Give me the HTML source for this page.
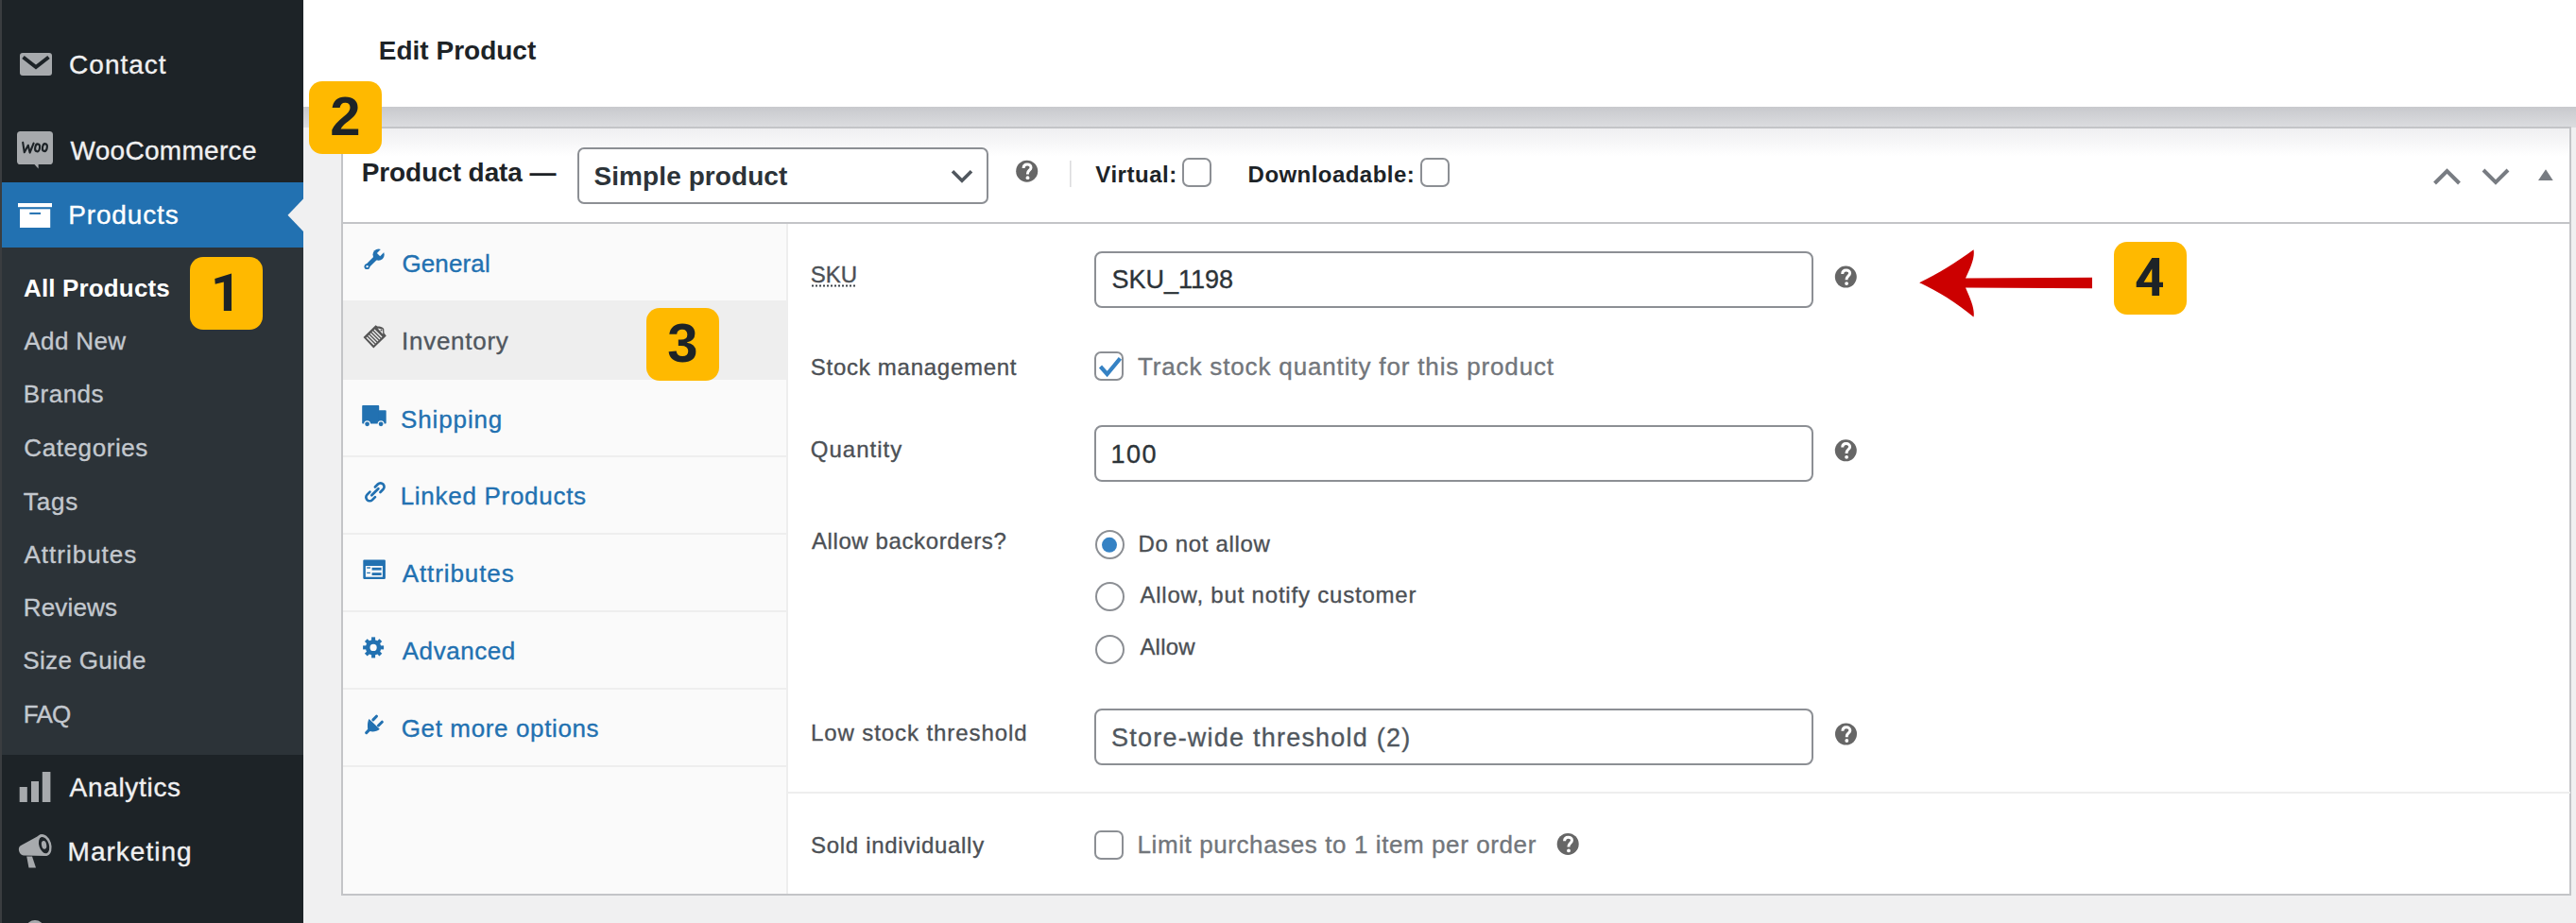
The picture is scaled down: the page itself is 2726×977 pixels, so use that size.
<!DOCTYPE html>
<html>
<head>
<meta charset="utf-8">
<style>
html,body{margin:0;padding:0}
body{width:2726px;height:977px;overflow:hidden;position:relative;background:#f0f0f1;font-family:"Liberation Sans",sans-serif}
.a{position:absolute;box-sizing:border-box}
.t{position:absolute;white-space:pre;font-family:"Liberation Sans",sans-serif}
.r{-webkit-text-stroke:0.35px currentColor}
.inp{position:absolute;box-sizing:border-box;border:2px solid #8c8f94;border-radius:8px;background:#fff}
.cb{position:absolute;box-sizing:border-box;width:31px;height:31px;border:2px solid #8c8f94;border-radius:7px;background:#fff}
.rd{position:absolute;box-sizing:border-box;width:31px;height:31px;border:2px solid #8c8f94;border-radius:50%;background:#fff}
.badge{position:absolute;width:77px;height:77px;background:#ffb900;border-radius:14px}
.sep{position:absolute;height:2px;background:#eeeeee}
svg{position:absolute;overflow:visible}
</style>
</head>
<body>
<!-- sidebar -->
<div class="a" style="left:0;top:0;width:321px;height:977px;background:#1d2327"></div>
<div class="a" style="left:0;top:262px;width:321px;height:537px;background:#2c3338"></div>
<div class="a" style="left:0;top:193px;width:321px;height:69px;background:#2271b1"></div>
<div class="a" style="left:0;top:0;width:2px;height:977px;background:#3a3d40"></div>
<svg style="left:0;top:0" width="330" height="977">
  <polygon points="304.5,227.8 321,210.6 321,245" fill="#f0f0f1"/>
  <!-- contact envelope -->
  <rect x="21" y="56" width="34" height="24" rx="3" fill="#a7aaad"/>
  <polyline points="24.5,60.5 38,71 51.5,60.5" fill="none" stroke="#1d2327" stroke-width="4" stroke-linejoin="miter"/>
  <!-- woo bubble -->
  <rect x="18" y="139" width="38" height="35" rx="3.6" fill="#a7aaad"/>
  <polygon points="35.5,173 40.6,178.5 40.6,173" fill="#a7aaad"/>
  <g transform="translate(10,130)" fill="none" stroke="#1d2327" stroke-width="2.1" stroke-linejoin="round" stroke-linecap="round">
    <polyline points="14.2,20.8 15.8,31.3 19.8,23.8 21.6,31.6 25.6,21.6"/>
    <ellipse cx="29.6" cy="26.4" rx="2.4" ry="4" transform="rotate(10 29.6 26.4)"/>
    <ellipse cx="37.4" cy="26.1" rx="2.4" ry="4" transform="rotate(10 37.4 26.1)"/>
  </g>
  <!-- products box -->
  <rect x="19" y="215" width="36" height="4.2" fill="#fff"/>
  <rect x="21" y="221.3" width="32.2" height="19.7" fill="#fff"/>
  <rect x="31.3" y="224.9" width="11.7" height="2" fill="#2271b1"/>
  <!-- analytics bars -->
  <rect x="20.7" y="833" width="8.1" height="16" fill="#a7aaad"/>
  <rect x="33" y="827" width="8" height="22" fill="#a7aaad"/>
  <rect x="44.8" y="817" width="8.6" height="32" fill="#a7aaad"/>
  <!-- megaphone -->
  <g transform="translate(10,870)">
    <path d="M12,25 L33,13.5 L38.5,36 L15,35.5 C10,35 8,27 12,25 Z" fill="#a7aaad"/>
    <path d="M18.2,36.5 L24,36.5 L28,48.5 L20.5,48.5 Z" fill="#a7aaad"/>
    <ellipse cx="36.4" cy="24.5" rx="7.8" ry="11.8" transform="rotate(-18 36.4 24.5)" fill="#a7aaad"/>
    <ellipse cx="36.6" cy="24.6" rx="5.2" ry="9" transform="rotate(-18 36.6 24.6)" fill="#1d2327"/>
    <ellipse cx="36.6" cy="24.4" rx="2.6" ry="4.4" transform="rotate(-10 36.6 24.4)" fill="#a7aaad"/>
  </g>
  <!-- bottom partial icon -->
  <ellipse cx="37" cy="982" rx="9" ry="8" fill="#a7aaad"/>
</svg>

<!-- top header -->
<div class="a" style="left:321px;top:0;width:2405px;height:113px;background:#fff"></div>
<div class="a" style="left:321px;top:113px;width:2405px;height:22px;background:linear-gradient(#c8c9cd,#dcdde0)"></div>

<!-- panel -->
<div class="a" style="left:361px;top:134px;width:2360px;height:814px;border:2px solid #c3c4c7;background:#fff"></div>
<div class="a" style="left:363px;top:136px;width:2356px;height:30px;background:linear-gradient(#efeff1,#ffffff)"></div>
<div class="a" style="left:363px;top:235px;width:2356px;height:2px;background:#c3c4c7"></div>
<!-- tabs column -->
<div class="a" style="left:363px;top:237px;width:469px;height:709px;background:#fafafa"></div>
<div class="a" style="left:832px;top:237px;width:2px;height:709px;background:#eeeeee"></div>
<div class="a" style="left:363px;top:318px;width:469px;height:84px;background:#eeeeee"></div>
<div class="sep" style="left:363px;top:482px;width:469px"></div>
<div class="sep" style="left:363px;top:564px;width:469px"></div>
<div class="sep" style="left:363px;top:646px;width:469px"></div>
<div class="sep" style="left:363px;top:728px;width:469px"></div>
<div class="sep" style="left:363px;top:810px;width:469px"></div>
<div class="sep" style="left:834px;top:838px;width:1886px"></div>

<!-- header controls -->
<div class="inp" style="left:611px;top:156px;width:435px;height:59.5px;border-radius:7px"></div>
<svg style="left:0;top:0" width="2726" height="977">
  <polyline points="1008,181.3 1018,191.3 1028,181.3" fill="none" stroke="#50575e" stroke-width="3.6"/>
  <!-- help icons -->
  <defs><g id="help"><circle cx="0" cy="0" r="11.5" fill="#666666"/>
    <path d="M-3.6,-3.2 C-3.6,-6.2 -1.8,-7.2 0.4,-7.2 C2.8,-7.2 4.3,-5.8 4.3,-3.8 C4.3,-1.2 0.8,-0.8 0.8,2.2 L0.8,3.2" fill="none" stroke="#fff" stroke-width="3"/>
    <circle cx="0.8" cy="7" r="1.9" fill="#fff"/></g></defs>
  <use href="#help" x="1086.7" y="181.2"/>
  <use href="#help" x="1953.3" y="293.1"/>
  <use href="#help" x="1953.3" y="476.8"/>
  <use href="#help" x="1953.5" y="777"/>
  <use href="#help" x="1659.2" y="893.4"/>
  <rect x="1132" y="170" width="1.6" height="28" fill="#dcdcde"/>
  <!-- right header controls -->
  <polyline points="2576.5,194 2589.5,181 2602.5,194" fill="none" stroke="#787c82" stroke-width="4"/>
  <polyline points="2628,180 2641,193 2654,180" fill="none" stroke="#787c82" stroke-width="4"/>
  <polygon points="2686,191 2694,179.3 2701.7,191" fill="#787c82"/>
  <!-- tab icons -->
  <g fill="#2271b1">
    <!-- wrench -->
    <g transform="translate(378,255)">
      <path d="M10.3,27.2 L20,17.5" stroke="#2271b1" stroke-width="4.6" stroke-linecap="round"/>
      <circle cx="10.4" cy="27.2" r="2.9"/>
      <circle cx="22.6" cy="14.6" r="6.1"/>
      <polygon points="24.2,16.2 20.9,12.9 28,5.8 31.3,9.1" fill="#fafafa"/>
      <circle cx="10.6" cy="27.1" r="1.2" fill="#fafafa"/>
    </g>
    <!-- truck -->
    <g transform="translate(376,420)">
      <rect x="7.2" y="9.1" width="18" height="19.5" rx="0.8"/>
      <rect x="24.6" y="14.3" width="8.1" height="14.3" rx="0.8"/>
      <circle cx="12.6" cy="28.8" r="3.5" fill="#fafafa"/>
      <circle cx="27.1" cy="28.8" r="3.5" fill="#fafafa"/>
      <circle cx="12.6" cy="28.8" r="2.4"/>
      <circle cx="27.1" cy="28.8" r="2.4"/>
    </g>
    <!-- link -->
    <g transform="translate(378,500)" fill="none" stroke="#2271b1" stroke-width="2.7" stroke-linecap="round">
      <path d="M13.46,20.62 L10.49,23.59 A3.9,3.9 0 0 0 16.01,29.11 L18.98,26.14"/>
      <path d="M18.92,15.46 L21.89,12.49 A3.9,3.9 0 0 1 27.41,18.01 L24.44,20.98"/>
      <path d="M15.3,24.3 L22.4,17.2"/>
    </g>
    <!-- attributes -->
    <g transform="translate(378,583)">
      <rect x="6.3" y="9.5" width="23.6" height="20.4" rx="1.2"/>
      <rect x="8.9" y="16" width="18" height="11.7" fill="#fafafa"/>
      <rect x="10.2" y="17.3" width="3.7" height="1.4"/>
      <rect x="10.2" y="22.8" width="3.7" height="1.2"/>
      <rect x="15.6" y="17.8" width="10" height="2.8"/>
      <rect x="15.6" y="23.2" width="10" height="2.8"/>
    </g>
    <!-- gear -->
    <g transform="translate(395.1,685.4)">
      <g id="tooth"><rect x="-2" y="-11" width="4" height="5"/></g>
      <use href="#tooth" transform="rotate(45)"/>
      <use href="#tooth" transform="rotate(90)"/>
      <use href="#tooth" transform="rotate(135)"/>
      <use href="#tooth" transform="rotate(180)"/>
      <use href="#tooth" transform="rotate(225)"/>
      <use href="#tooth" transform="rotate(270)"/>
      <use href="#tooth" transform="rotate(315)"/>
      <circle r="8.2"/>
      <circle r="3.6" fill="#fafafa"/>
    </g>
    <!-- plug -->
    <g transform="translate(378,748)">
      <path d="M12.6,13 L23.8,23.8 C21,26.5 16,26.8 13.5,26 L10.3,29.3 A1.9,1.9 0 0 1 8.2,27 L11.2,23.8 C10.8,20.5 10.8,15.5 12.6,13 Z"/>
      <path d="M16.9,13.9 L20.4,10.2 M22.5,20 L26.3,16.2" stroke="#2271b1" stroke-width="3" stroke-linecap="round"/>
    </g>
  </g>
  <!-- inventory tag icon -->
  <g transform="translate(378,335)">
    <path d="M6.5,22.1 L19.5,9.3 L21.5,10.6 C23,10.5 27,11 28.2,13 L28.5,17.5 L30.8,20.4 L17.3,33.4 Z" fill="#555555"/>
    <path d="M21.6,12.6 L27,13.5 L27.2,18.7 Z" fill="#eeeeee"/>
    <circle cx="25.5" cy="14.6" r="1" fill="#555555"/>
    <g stroke="#eeeeee" stroke-width="1.4">
      <path d="M10,22 L18,30"/><path d="M12,20 L20,28"/><path d="M14,18 L22,26"/><path d="M16,16 L24,24"/><path d="M18,14 L26,22"/>
    </g>
  </g>
  <!-- SKU dotted underline -->
  <line x1="859" y1="302.5" x2="906" y2="302.5" stroke="#3c434a" stroke-width="2" stroke-dasharray="2,2"/>
  <!-- red arrow -->
  <path d="M2214,293.8 L2214,305.2 L2080,304.5 C2086,318 2090,328 2088.5,335.6 C2070,320 2050,308 2031.2,299.2 C2050,290 2070,278 2088.5,264.3 C2090,272 2086,282 2080,294.5 Z" fill="#cc0000"/>
</svg>

<div class="inp" style="left:1158.2px;top:266.1px;width:760.4px;height:59.5px"></div>
<div class="inp" style="left:1158.2px;top:450.2px;width:760.4px;height:59.6px"></div>
<div class="inp" style="left:1158.2px;top:750.2px;width:760.4px;height:59.4px"></div>
<div class="cb" style="left:1251px;top:166.5px"></div>
<div class="cb" style="left:1503px;top:166.5px"></div>
<div class="cb" style="left:1158.2px;top:372.4px"></div>
<div class="cb" style="left:1158.3px;top:878.7px"></div>
<div class="rd" style="left:1158.6px;top:561.3px"></div>
<div class="rd" style="left:1158.6px;top:616.3px"></div>
<div class="rd" style="left:1158.6px;top:671.5px"></div>

<svg style="left:0;top:0" width="2726" height="977">
  <polyline points="1164.5,388 1171.6,396 1185.4,379.4" fill="none" stroke="#3582c4" stroke-width="4.2"/>
  <circle cx="1174" cy="576.8" r="8" fill="#3582c4"/>
</svg>

<!-- badges -->
<div class="badge" style="left:201px;top:272px"></div>
<div class="badge" style="left:327px;top:86px"></div>
<div class="badge" style="left:684px;top:326px"></div>
<div class="badge" style="left:2237px;top:256px"></div>

<svg style="left:0;top:0" width="400" height="400"><path d="M245,289.5 L245,328.9 L236.8,328.9 L236.8,298.6 L227.7,300.8 L227.3,295.1 Z" fill="#1d2327"/></svg>
<svg style="left:0;top:0" width="2400" height="400"><path fill-rule="evenodd" fill="#1d2327" d="M2277.3,272.9 L2285.1,272.9 L2285.1,298.7 L2289,298.7 L2289,304.1 L2285.1,304.1 L2285.1,312.9 L2277.3,312.9 L2277.3,304.1 L2260.7,304.1 L2260.7,298.7 Z M2277.3,284.6 L2268.6,298.7 L2277.3,298.7 Z"/></svg>
<div class="t r" style="left:73.1px;top:55.3px;font-size:28px;line-height:28px;font-weight:400;color:#f0f0f1;letter-spacing:1.00px">Contact</div>
<div class="t r" style="left:74.5px;top:146.0px;font-size:28px;line-height:28px;font-weight:400;color:#f0f0f1;letter-spacing:0.30px">WooCommerce</div>
<div class="t r" style="left:72.2px;top:213.9px;font-size:28px;line-height:28px;font-weight:400;color:#ffffff;letter-spacing:0.86px">Products</div>
<div class="t" style="left:25.0px;top:292.0px;font-size:26px;line-height:26px;font-weight:700;color:#ffffff;letter-spacing:0.15px">All Products</div>
<div class="t r" style="left:25.4px;top:347.8px;font-size:26px;line-height:26px;font-weight:400;color:#c3c8ce;letter-spacing:0.35px">Add New</div>
<div class="t r" style="left:24.7px;top:404.2px;font-size:26px;line-height:26px;font-weight:400;color:#c3c8ce;letter-spacing:0.50px">Brands</div>
<div class="t r" style="left:25.3px;top:461.0px;font-size:26px;line-height:26px;font-weight:400;color:#c3c8ce;letter-spacing:0.59px">Categories</div>
<div class="t r" style="left:24.8px;top:517.5px;font-size:26px;line-height:26px;font-weight:400;color:#c3c8ce;letter-spacing:0.83px">Tags</div>
<div class="t r" style="left:25.4px;top:574.1px;font-size:26px;line-height:26px;font-weight:400;color:#c3c8ce;letter-spacing:1.01px">Attributes</div>
<div class="t r" style="left:24.8px;top:630.2px;font-size:26px;line-height:26px;font-weight:400;color:#c3c8ce;letter-spacing:0.17px">Reviews</div>
<div class="t r" style="left:24.3px;top:685.7px;font-size:26px;line-height:26px;font-weight:400;color:#c3c8ce;letter-spacing:0.32px">Size Guide</div>
<div class="t r" style="left:24.8px;top:743.0px;font-size:26px;line-height:26px;font-weight:400;color:#c3c8ce;letter-spacing:-0.75px">FAQ</div>
<div class="t r" style="left:73.6px;top:820.0px;font-size:28px;line-height:28px;font-weight:400;color:#f0f0f1;letter-spacing:0.68px">Analytics</div>
<div class="t r" style="left:71.6px;top:887.6px;font-size:28px;line-height:28px;font-weight:400;color:#f0f0f1;letter-spacing:1.00px">Marketing</div>
<div class="t" style="left:400.8px;top:39.7px;font-size:28px;line-height:28px;font-weight:700;color:#1d2327;letter-spacing:0.00px">Edit Product</div>
<div class="t" style="left:382.7px;top:168.8px;font-size:28px;line-height:28px;font-weight:700;color:#1d2327;letter-spacing:-0.08px">Product data —</div>
<div class="t" style="left:628.5px;top:172.9px;font-size:28px;line-height:28px;font-weight:700;color:#2c3338;letter-spacing:0.08px">Simple product</div>
<div class="t" style="left:1159.3px;top:173.0px;font-size:24px;line-height:24px;font-weight:700;color:#1d2327;letter-spacing:0.53px">Virtual:</div>
<div class="t" style="left:1320.6px;top:173.0px;font-size:24px;line-height:24px;font-weight:700;color:#1d2327;letter-spacing:0.45px">Downloadable:</div>
<div class="t r" style="left:425.4px;top:265.8px;font-size:26px;line-height:26px;font-weight:400;color:#2271b1;letter-spacing:0.13px">General</div>
<div class="t r" style="left:425.0px;top:348.4px;font-size:26px;line-height:26px;font-weight:400;color:#50575e;letter-spacing:0.74px">Inventory</div>
<div class="t r" style="left:424.1px;top:431.0px;font-size:26px;line-height:26px;font-weight:400;color:#2271b1;letter-spacing:0.86px">Shipping</div>
<div class="t r" style="left:423.7px;top:512.2px;font-size:26px;line-height:26px;font-weight:400;color:#2271b1;letter-spacing:0.71px">Linked Products</div>
<div class="t r" style="left:425.7px;top:594.3px;font-size:26px;line-height:26px;font-weight:400;color:#2271b1;letter-spacing:0.91px">Attributes</div>
<div class="t r" style="left:425.7px;top:676.1px;font-size:26px;line-height:26px;font-weight:400;color:#2271b1;letter-spacing:0.57px">Advanced</div>
<div class="t r" style="left:424.7px;top:758.3px;font-size:26px;line-height:26px;font-weight:400;color:#2271b1;letter-spacing:0.63px">Get more options</div>
<div class="t r" style="left:857.8px;top:278.6px;font-size:24px;line-height:24px;font-weight:400;color:#4c5055;letter-spacing:0.00px">SKU</div>
<div class="t r" style="left:857.8px;top:377.2px;font-size:24px;line-height:24px;font-weight:400;color:#4c5055;letter-spacing:0.73px">Stock management</div>
<div class="t r" style="left:857.8px;top:463.6px;font-size:24px;line-height:24px;font-weight:400;color:#4c5055;letter-spacing:1.00px">Quantity</div>
<div class="t r" style="left:858.9px;top:561.4px;font-size:24px;line-height:24px;font-weight:400;color:#4c5055;letter-spacing:0.61px">Allow backorders?</div>
<div class="t r" style="left:857.9px;top:763.6px;font-size:24px;line-height:24px;font-weight:400;color:#4c5055;letter-spacing:0.92px">Low stock threshold</div>
<div class="t r" style="left:858.0px;top:882.5px;font-size:24px;line-height:24px;font-weight:400;color:#4c5055;letter-spacing:0.69px">Sold individually</div>
<div class="t r" style="left:1176.4px;top:283.2px;font-size:27px;line-height:27px;font-weight:400;color:#2c3338;letter-spacing:0.00px">SKU_1198</div>
<div class="t r" style="left:1175.4px;top:467.7px;font-size:27px;line-height:27px;font-weight:400;color:#2c3338;letter-spacing:1.50px">100</div>
<div class="t r" style="left:1204.0px;top:375.4px;font-size:26px;line-height:26px;font-weight:400;color:#72767b;letter-spacing:0.85px">Track stock quantity for this product</div>
<div class="t r" style="left:1204.4px;top:564.3px;font-size:24px;line-height:24px;font-weight:400;color:#4c5055;letter-spacing:0.68px">Do not allow</div>
<div class="t r" style="left:1206.4px;top:618.3px;font-size:24px;line-height:24px;font-weight:400;color:#4c5055;letter-spacing:0.80px">Allow, but notify customer</div>
<div class="t r" style="left:1206.4px;top:673.2px;font-size:24px;line-height:24px;font-weight:400;color:#4c5055;letter-spacing:0.20px">Allow</div>
<div class="t r" style="left:1176.0px;top:768.0px;font-size:27px;line-height:27px;font-weight:400;color:#50575e;letter-spacing:1.22px">Store-wide threshold (2)</div>
<div class="t r" style="left:1203.5px;top:881.0px;font-size:26px;line-height:26px;font-weight:400;color:#72767b;letter-spacing:0.59px">Limit purchases to 1 item per order</div>
<div class="t" style="left:349.3px;top:94.1px;font-size:58px;line-height:58px;font-weight:700;color:#1d2327">2</div>
<div class="t" style="left:706.3px;top:334.1px;font-size:58px;line-height:58px;font-weight:700;color:#1d2327">3</div>
</body>
</html>
